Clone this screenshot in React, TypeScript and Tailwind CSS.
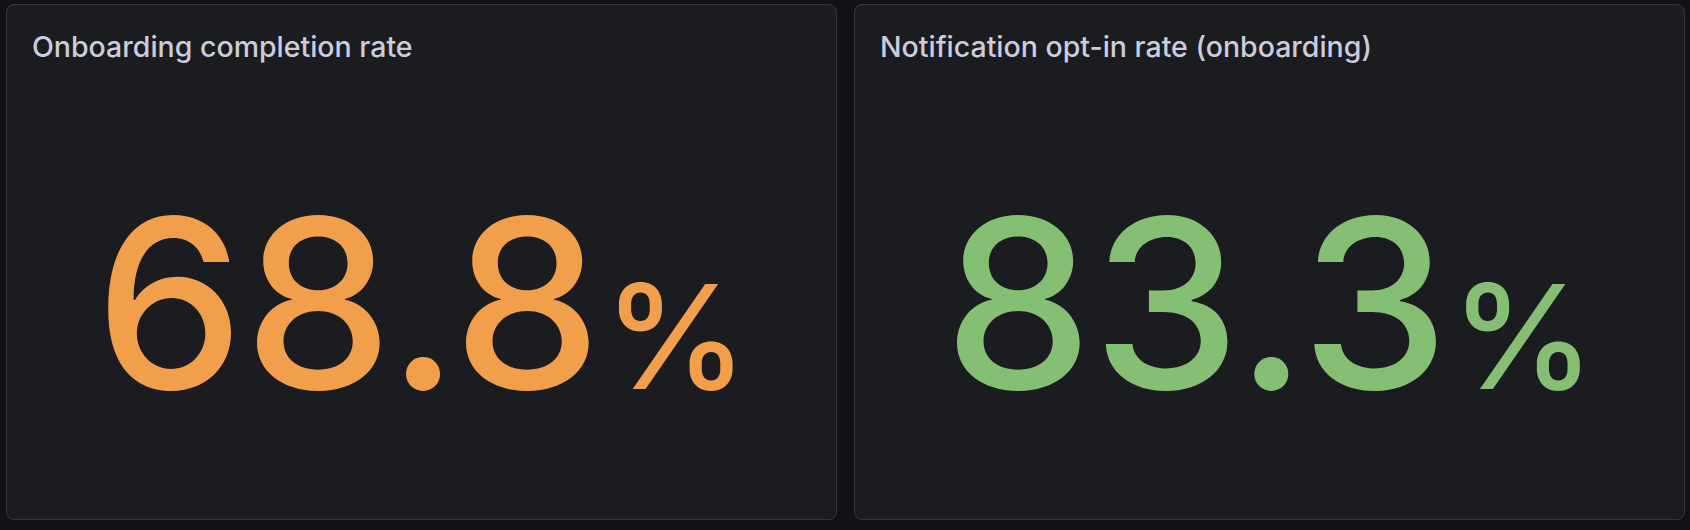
import React from "react";

type Stat = {
  title: string;
  value: string;
  unit: string;
  color: string;
};

const stats: Stat[] = [
  { title: "Onboarding completion rate", value: "68.8", unit: "%", color: "text-[#f29f4b]" },
  { title: "Notification opt-in rate (onboarding)", value: "83.3", unit: "%", color: "text-[#85bf73]" },
];

function StatPanel({ stat }: { stat: Stat }) {
  return (
    <div className="flex-1 flex flex-col rounded-lg border border-[#36373c] bg-[#1b1c20]">
      {/* Header */}
      <div className="px-[25px] pt-[24px] h-[72px]">
        <h2 className="text-[28.5px] leading-[36px] font-medium text-[#ccccdc]">
          {stat.title}
        </h2>
      </div>

      {/* Value */}
      <div className="flex-1 flex items-center justify-center pt-[10px]">
        <span className={`${stat.color} font-medium leading-none whitespace-nowrap`}>
          <span className="text-[236px]">{stat.value}</span>
          <span className="text-[145px] ml-[2px]">{stat.unit}</span>
        </span>
      </div>
    </div>
  );
}

export default function App() {
  return (
    <div className="w-[1690px] h-[530px] bg-[#111217] flex gap-[17px] pl-[6px] pr-[5px] pt-[4px] pb-[10px] font-['Inter',sans-serif]">
      {stats.map((s) => (
        <StatPanel key={s.title} stat={s} />
      ))}
    </div>
  );
}
